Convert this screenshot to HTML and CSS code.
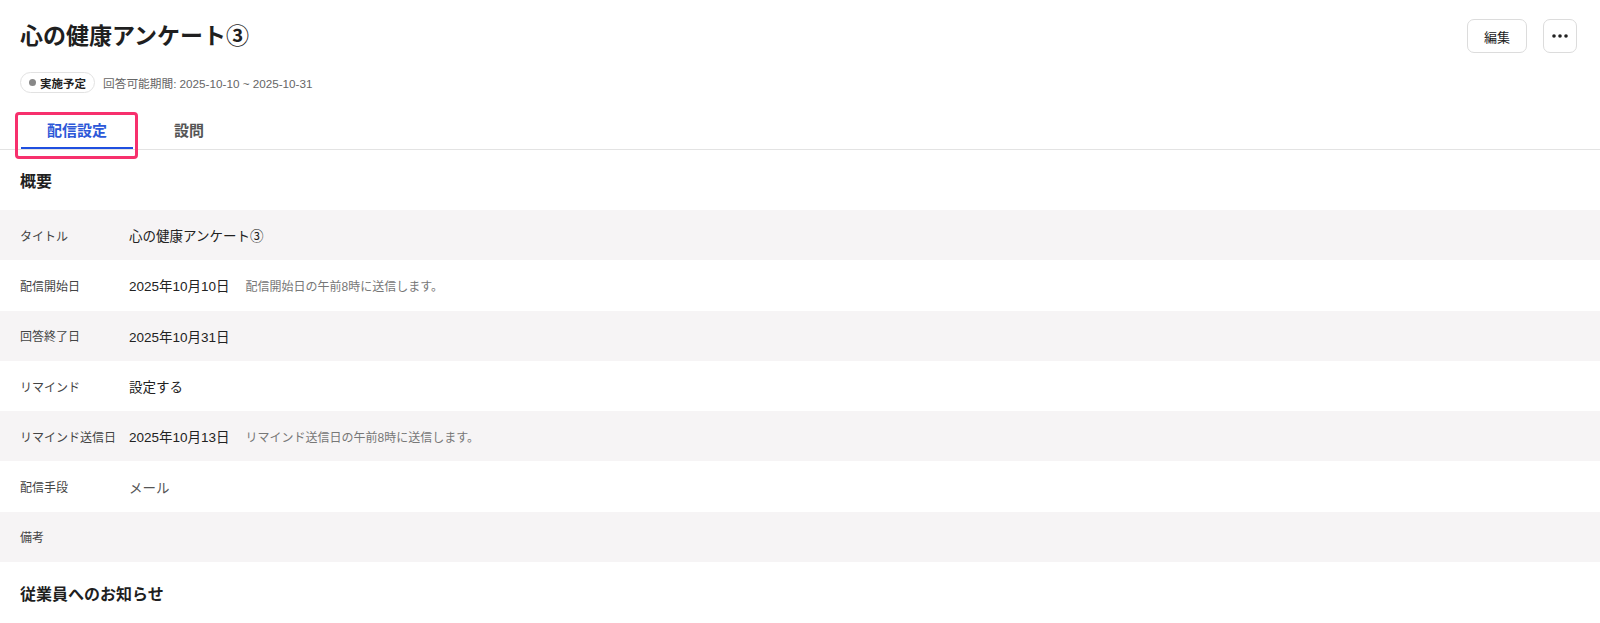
FILE: index.html
```html
<!DOCTYPE html>
<html lang="ja">
<head>
  <meta charset="UTF-8">
  <title>心の健康アンケート③</title>
  <link rel="stylesheet" href="styles.css">
</head>
<body>
  <!-- ヘッダー -->
  <div class="page-head">
    <div class="head-main">
      <h1 class="page-title">心の健康アンケート③</h1>
      <div class="meta">
        <span class="status"><span class="status-dot"></span>実施予定</span>
        <span class="period">回答可能期間: 2025-10-10 ~ 2025-10-31</span>
      </div>
    </div>
    <div class="head-actions">
      <button class="btn btn-edit">編集</button>
      <button class="btn btn-more" aria-label="その他">
        <svg width="16" height="4" viewBox="0 0 16 4"><circle cx="2" cy="2" r="1.8"/><circle cx="8" cy="2" r="1.8"/><circle cx="14" cy="2" r="1.8"/></svg>
      </button>
    </div>
  </div>

  <!-- タブ -->
  <div class="tabs">
    <div class="tab active">配信設定</div>
    <div class="tab">設問</div>
  </div>

  <!-- 概要 -->
  <h2 class="section-title">概要</h2>
  <div class="detail-list">
    <div class="detail-row">
      <div class="label">タイトル</div>
      <div class="value">心の健康アンケート③</div>
    </div>
    <div class="detail-row">
      <div class="label">配信開始日</div>
      <div class="value">2025年10月10日<span class="note">配信開始日の午前8時に送信します。</span></div>
    </div>
    <div class="detail-row">
      <div class="label">回答終了日</div>
      <div class="value">2025年10月31日</div>
    </div>
    <div class="detail-row">
      <div class="label">リマインド</div>
      <div class="value">設定する</div>
    </div>
    <div class="detail-row">
      <div class="label">リマインド送信日</div>
      <div class="value">2025年10月13日<span class="note">リマインド送信日の午前8時に送信します。</span></div>
    </div>
    <div class="detail-row">
      <div class="label">配信手段</div>
      <div class="value muted">メール</div>
    </div>
    <div class="detail-row">
      <div class="label">備考</div>
      <div class="value"></div>
    </div>
  </div>

  <h2 class="section-title second">従業員へのお知らせ</h2>
</body>
</html>
```

FILE: styles.css
```css
body {
  margin: 0;
  font-family: "Liberation Sans", "Noto Sans CJK JP", sans-serif;
  color: #222;
  background-color: #fff;
}
.page-head {
  display: flex;
  justify-content: space-between;
  align-items: flex-start;
  padding: 19px 23px 0 20px;
}
.page-title {
  margin: 0;
  font-size: 23px;
  line-height: 34px;
  font-weight: bold;
  color: #1f1f1f;
}
.meta {
  display: flex;
  align-items: center;
  margin-top: 19px;
}
.status {
  display: inline-flex;
  align-items: center;
  height: 21px;
  padding: 0 8px;
  border: 1px solid #e2e2e2;
  border-radius: 11px;
  font-size: 11.5px;
  font-weight: bold;
  color: #222;
  box-sizing: border-box;
}
.status-dot {
  width: 7px;
  height: 7px;
  border-radius: 50%;
  background-color: #888;
  margin-right: 4px;
}
.period {
  margin-left: 8px;
  font-size: 11.7px;
  color: #666;
}
.head-actions {
  display: flex;
  gap: 16px;
}
.btn {
  height: 34px;
  border: 1px solid #dcdcdc;
  border-radius: 7px;
  background-color: #fff;
  font-family: inherit;
  font-size: 13px;
  color: #222;
  cursor: pointer;
}
.btn-edit {
  width: 60px;
}
.btn-more {
  width: 34px;
  padding: 0;
  display: flex;
  align-items: center;
  justify-content: center;
}
.btn-more svg {
  fill: #222;
}
.tabs {
  display: flex;
  margin-top: 21px;
  padding-left: 21px;
  border-bottom: 1px solid #e3e3e3;
}
.tab {
  position: relative;
  width: 112px;
  height: 35px;
  line-height: 34px;
  text-align: center;
  font-size: 15px;
  font-weight: bold;
  color: #555;
  cursor: pointer;
}
.tab.active {
  color: #2d58d8;
  box-shadow: inset 0 -2px 0 #1f4fe0;
}
/* 選択中タブの強調枠 */
.tab.active::after {
  content: "";
  position: absolute;
  left: -6px;
  right: -5px;
  top: -2px;
  bottom: -10px;
  border: 3px solid #f7306d;
  border-radius: 4px;
}
.section-title {
  margin: 0;
  padding: 21px 20px 17px;
  font-size: 16px;
  line-height: 22px;
  font-weight: bold;
  color: #1f1f1f;
}
.section-title.second {
  padding-top: 22px;
}
.detail-row {
  display: grid;
  grid-template-columns: 109px 1fr;
  align-items: center;
  height: 50.3px;
  padding-left: 20px;
}
.detail-row:nth-child(odd) {
  background-color: #f6f4f5;
}
.label {
  font-size: 12px;
  color: #444;
}
.value {
  font-size: 13.5px;
  color: #222;
}
.value.muted {
  color: #555;
}
.note {
  margin-left: 16px;
  font-size: 12px;
  color: #777;
}
```
